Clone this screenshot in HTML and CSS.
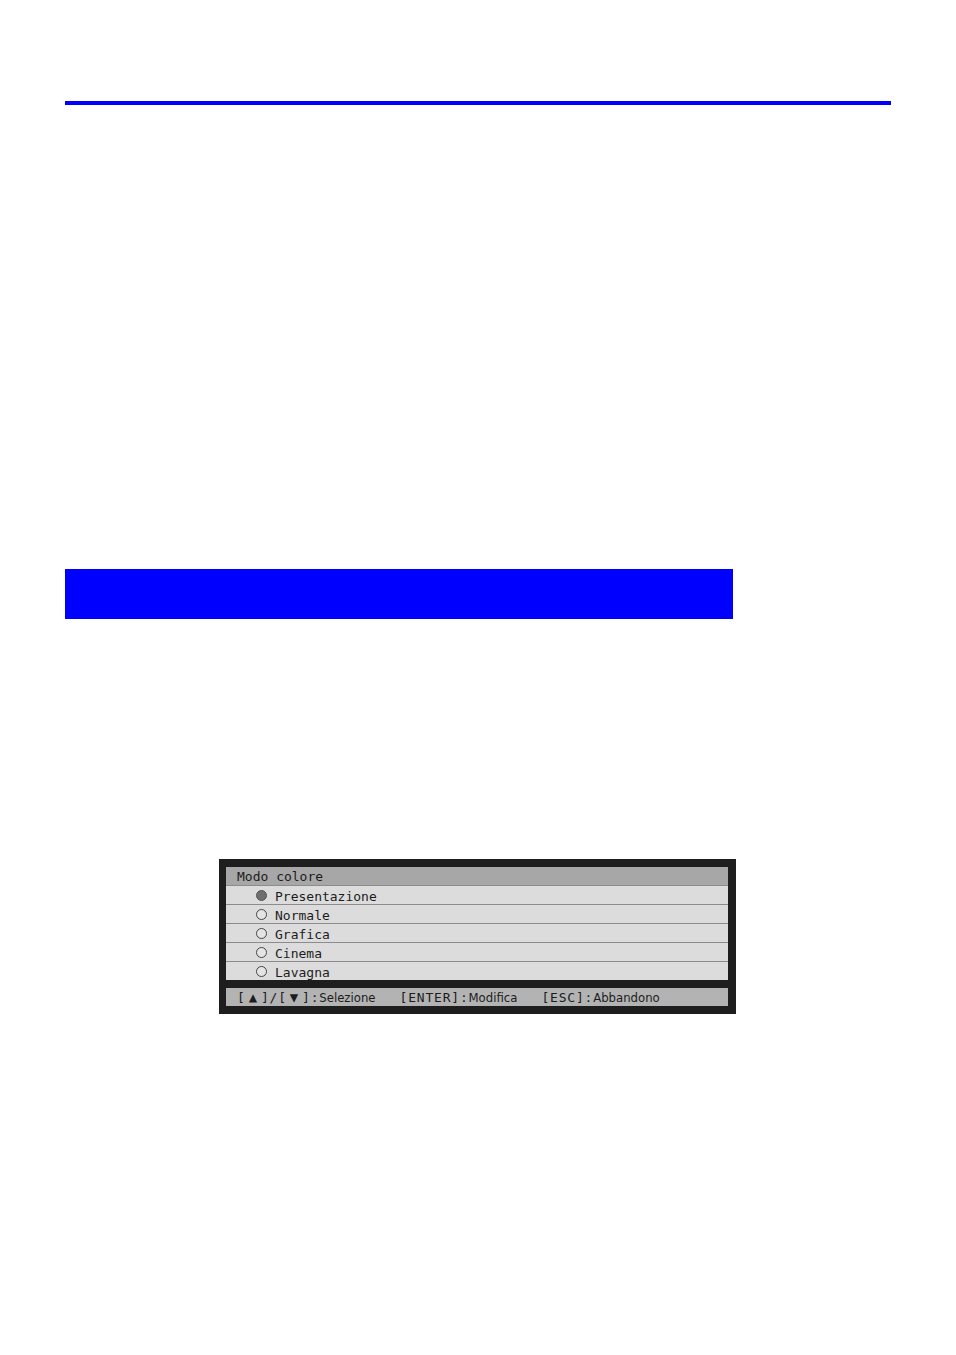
FILE: index.html
```html
<!doctype html>
<html><head>
    <meta charset="utf-8">
    <link rel="stylesheet" href="styles.css">
</head>
<body>
    <div class='page'>
        <div class='top-rule'></div>
        <div class='heading-bar'></div>

        <!-- menu a schermo del proiettore -->
        <div class='screen'>
            <div class='menu-title'>Modo colore</div>
            <div class='menu-row'><span class='radio radio-on'></span>Presentazione</div>
            <div class='menu-row'><span class='radio'></span>Normale</div>
            <div class='menu-row'><span class='radio'></span>Grafica</div>
            <div class='menu-row'><span class='radio'></span>Cinema</div>
            <div class='menu-row'><span class='radio'></span>Lavagna</div>
            <div class='menu-help'>
                <span class='key'>[<span class='arrow'>▲</span>]/[<span class='arrow'>▼</span>]:</span><span class='act'>Selezione</span>
                <span class='key'>[ENTER]:</span><span class='act'>Modifica</span>
                <span class='key'>[ESC]:</span><span class='act'>Abbandono</span>
            </div>
        </div>
    </div>
</body></html>
```

FILE: styles.css
```css
body {
    margin: 0;
    background: #fff;
    font-family: "Liberation Sans", Arial, sans-serif;
}

.page {
    display: flex;
    flex-direction: column;
    align-items: flex-start;
    padding: 101px 65px 0 65px;
}

.top-rule {
    width: 826px;
    height: 4px;
    background: #0000ff;
}

.heading-bar {
    width: 668px;
    height: 50px;
    margin-top: 464px;
    background: #0000ff;
}

.screen {
    margin-top: 240px;
    margin-left: 154px;
    width: 502px;
    padding: 8px 8px 8px 7px;
    background: #1e1e1e;
    color: #1c1c1c;
    font-family: "DejaVu Sans Mono", "Liberation Mono", monospace;
    font-size: 13px;
}

.menu-title {
    height: 18px;
    line-height: 20px;
    padding-left: 11px;
    background: #a7a7a7;
}

.menu-row {
    box-sizing: border-box;
    display: flex;
    align-items: center;
    height: 19px;
    padding-top: 2px;
    padding-left: 30px;
    background: #dcdcdc;
    border-top: 1px solid #8c8c8c;
}

.radio {
    width: 9px;
    height: 9px;
    margin-right: 8px;
    margin-top: -1px;
    border: 1px solid #444;
    border-radius: 50%;
    background: #e4e4e4;
}

.radio-on {
    background: #6e6e6e;
    border-color: #555;
}

.menu-help {
    display: flex;
    align-items: center;
    height: 18px;
    margin-top: 8px;
    padding-left: 11px;
    background: #b3b3b3;
    font-size: 13px;
}

.key {
    letter-spacing: 0.8px;
}

.arrow {
    display: inline-block;
    margin: 0 3px;
    font-size: 14px;
}

.act {
    font-family: "DejaVu Sans Condensed", "DejaVu Sans", sans-serif;
    font-stretch: condensed;
    font-size: 13px;
    letter-spacing: 0;
    margin-right: 24px;
}
```
